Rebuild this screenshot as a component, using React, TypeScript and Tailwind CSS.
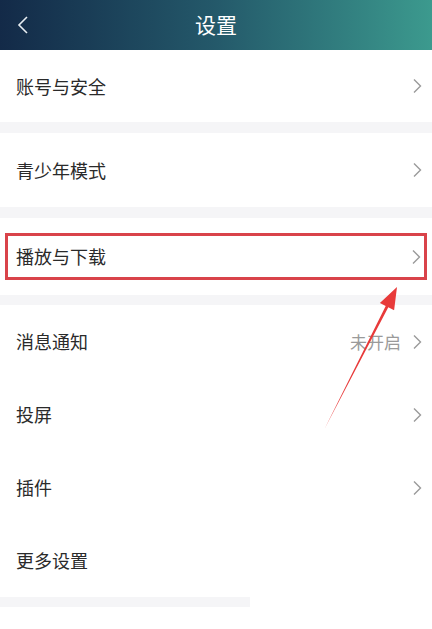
import React from "react";

const font = { fontFamily: '"Noto Sans CJK SC", "Noto Sans", sans-serif' };

function Chevron() {
  return (
    <svg width="10" height="16" viewBox="0 0 10 16" className="shrink-0">
      <path d="M2 1.5 L8.5 8 L2 14.5" fill="none" stroke="#9a9a9a" strokeWidth="1.4" />
    </svg>
  );
}

function Row({ label, h, value, arrow = true }: { label: string; h: string; value?: string; arrow?: boolean }) {
  return (
    <div className={`flex items-center justify-between bg-white pl-4 pr-[10px] ${h}`}>
      <span className="text-[18px] text-[#2a2a2a]">{label}</span>
      <div className="flex items-center gap-[11px]">
        {value && <span className="text-[17px] text-[#9a9a9a]">{value}</span>}
        {arrow && <Chevron />}
      </div>
    </div>
  );
}

export default function App() {
  return (
    <div className="relative w-[432px] h-[629px] overflow-hidden bg-white" style={font}>
      <div className="relative flex h-[50px] items-center justify-center bg-gradient-to-r from-[#132a48] via-[#24596a] to-[#3c9a8e]">
        <svg width="14" height="20" viewBox="0 0 14 20" className="absolute left-[16px] top-[15px]">
          <path d="M11 2 L3 10 L11 18" fill="none" stroke="#e8eef2" strokeWidth="1.6" />
        </svg>
        <span className="text-[21px] text-white">设置</span>
      </div>

      <Row label="账号与安全" h="h-[72px]" />
      <div className="h-[11px] bg-[#f5f5f7]" />
      <Row label="青少年模式" h="h-[74px]" />
      <div className="h-[11px] bg-[#f5f5f7]" />
      <div className="flex h-[77px] items-center bg-white px-[5px]">
        <div className="flex h-[47px] w-full items-center justify-between border-[3px] border-[#d9434a] pl-[8px] pr-[3px]">
          <span className="text-[18px] text-[#2a2a2a]">播放与下载</span>
          <Chevron />
        </div>
      </div>
      <div className="h-[10px] bg-[#f5f5f7]" />
      <Row label="消息通知" h="h-[73px]" value="未开启" />
      <Row label="投屏" h="h-[73px]" />
      <Row label="插件" h="h-[73px]" />
      <Row label="更多设置" h="h-[73px]" arrow={false} />
      <div className="h-[10px] w-[250px] bg-[#f5f5f7]" />

      <svg className="pointer-events-none absolute inset-0" width="432" height="629" viewBox="0 0 432 629">
        <polygon
          points="397,287 394.1,310.2 388.3,307.3 325,428 385.7,306 379.9,303"
          fill="#e83a3a"
        />
      </svg>
    </div>
  );
}
